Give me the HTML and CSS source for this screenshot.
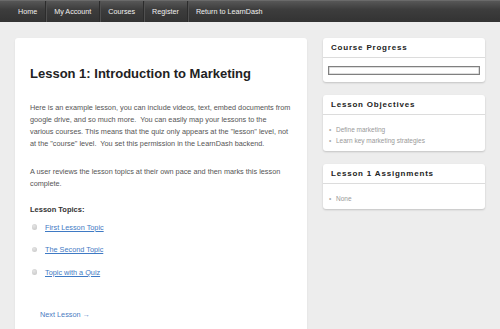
FILE: index.html
```html
<!DOCTYPE html>
<html>
<head>
<meta charset="utf-8">
<link rel="stylesheet" href="styles.css">
</head>
<body>
<nav class="topnav">
  <a class="nav-item">Home</a>
  <a class="nav-item">My Account</a>
  <a class="nav-item">Courses</a>
  <a class="nav-item">Register</a>
  <a class="nav-item">Return to LearnDash</a>
</nav>
<div class="page">
  <main class="content-card">
    <h1 class="lesson-title">Lesson 1: Introduction to Marketing</h1>
    <p class="para">Here is an example lesson, you can include videos, text, embed documents from google drive, and so much more.&nbsp; You can easily map your lessons to the various courses. This means that the quiz only appears at the "lesson" level, not at the "course" level.&nbsp; You set this permission in the LearnDash backend.</p>
    <p class="para para-2">A user reviews the lesson topics at their own pace and then marks this lesson complete.</p>
    <h4 class="topics-heading">Lesson Topics:</h4>
    <ul class="topics">
      <li class="topic"><span class="dot"></span><a class="topic-link">First Lesson Topic</a></li>
      <li class="topic"><span class="dot"></span><a class="topic-link">The Second Topic</a></li>
      <li class="topic"><span class="dot"></span><a class="topic-link">Topic with a Quiz</a></li>
    </ul>
    <a class="next-lesson">Next Lesson →</a>
  </main>
  <aside class="sidebar">
    <section class="widget">
      <h3 class="widget-title">Course Progress</h3>
      <div class="widget-body progress-body"><div class="progress-bar"></div></div>
    </section>
    <section class="widget">
      <h3 class="widget-title">Lesson Objectives</h3>
      <ul class="widget-body widget-list">
        <li>Define marketing</li>
        <li>Learn key marketing strategies</li>
      </ul>
    </section>
    <section class="widget">
      <h3 class="widget-title">Lesson 1 Assignments</h3>
      <ul class="widget-body widget-list">
        <li>None</li>
      </ul>
    </section>
  </aside>
</div>
</body>
</html>
```
FILE: styles.css
```css
* { box-sizing: border-box; }
html, body { margin: 0; padding: 0; }
body {
  background: #ededed;
  font-family: "Liberation Sans", Arial, sans-serif;
  color: #555;
  overflow: hidden;
  height: 329px;
}
.topnav {
  display: flex;
  height: 22px;
  padding-left: 10px;
  background: linear-gradient(#575757, #3d3d3d 40%, #333);
  border-top: 1px solid #6a6a6a;
}
.nav-item {
  color: #f0f0f0;
  font-size: 7.2px;
  line-height: 21px;
  padding: 0 8px;
  text-decoration: none;
}
.nav-item + .nav-item {
  border-left: 1px solid #2c2c2c;
  box-shadow: inset 1px 0 0 #505050;
}
.page {
  display: flex;
  gap: 16px;
  padding: 16px 15px 0 15px;
  align-items: flex-start;
}
.content-card {
  width: 292px;
  flex: none;
  background: #fff;
  border-radius: 3px 3px 0 0;
  padding: 28px 15px 0 15px;
  height: 291px;
  box-shadow: 0 1px 2px rgba(0,0,0,0.08);
}
.lesson-title {
  margin: 0;
  font-size: 13px;
  line-height: 16px;
  color: #222;
  font-weight: bold;
}
.para {
  margin: 20px 0 0 0;
  font-size: 7.3px;
  line-height: 12px;
  color: #555;
}
.para-2 { margin-top: 16px; }
.topics-heading {
  margin: 14px 0 0 0;
  font-size: 7.5px;
  line-height: 12px;
  font-weight: bold;
  color: #333;
}
.topics {
  list-style: none;
  margin: 0;
  padding: 0;
}
.topic {
  display: flex;
  align-items: center;
  height: 22.5px;
  font-size: 7.3px;
}
.dot {
  width: 5.5px;
  height: 5.5px;
  border-radius: 50%;
  background: radial-gradient(circle at 40% 35%, #e4e4e4, #c4c4c4);
  margin-left: 1.5px;
  margin-right: 8px;
  margin-top: -1px;
}
.topic-link {
  color: #3f7ac4;
  text-decoration: underline;
}
.next-lesson {
  display: inline-block;
  margin: 26px 0 0 10px;
  font-size: 7.3px;
  color: #4a7bbf;
  text-decoration: none;
}
.sidebar {
  width: 162px;
  flex: none;
  display: flex;
  flex-direction: column;
  gap: 13px;
}
.widget {
  background: #fff;
  border-radius: 3px;
  box-shadow: 0 1px 2px rgba(0,0,0,0.18);
}
.widget-title {
  margin: 0;
  height: 20px;
  line-height: 19px;
  padding-left: 8px;
  font-size: 8px;
  letter-spacing: 0.8px;
  font-weight: bold;
  color: #222;
  border-bottom: 1px solid #dcdcdc;
}
.progress-body {
  padding: 8px 5px 7px 5px;
}
.progress-bar {
  height: 9px;
  border: 1px solid #808080;
  box-shadow: inset 0 0 0 0.5px #bbb;
}
.widget-list {
  list-style: none;
  margin: 0;
  padding: 8.5px 6px 5.5px 6px;
}
.widget-list li {
  font-size: 6.5px;
  line-height: 11px;
  color: #999;
  display: flex;
}
.widget-list li::before {
  content: "•";
  width: 7px;
  color: #aaa;
}
```
